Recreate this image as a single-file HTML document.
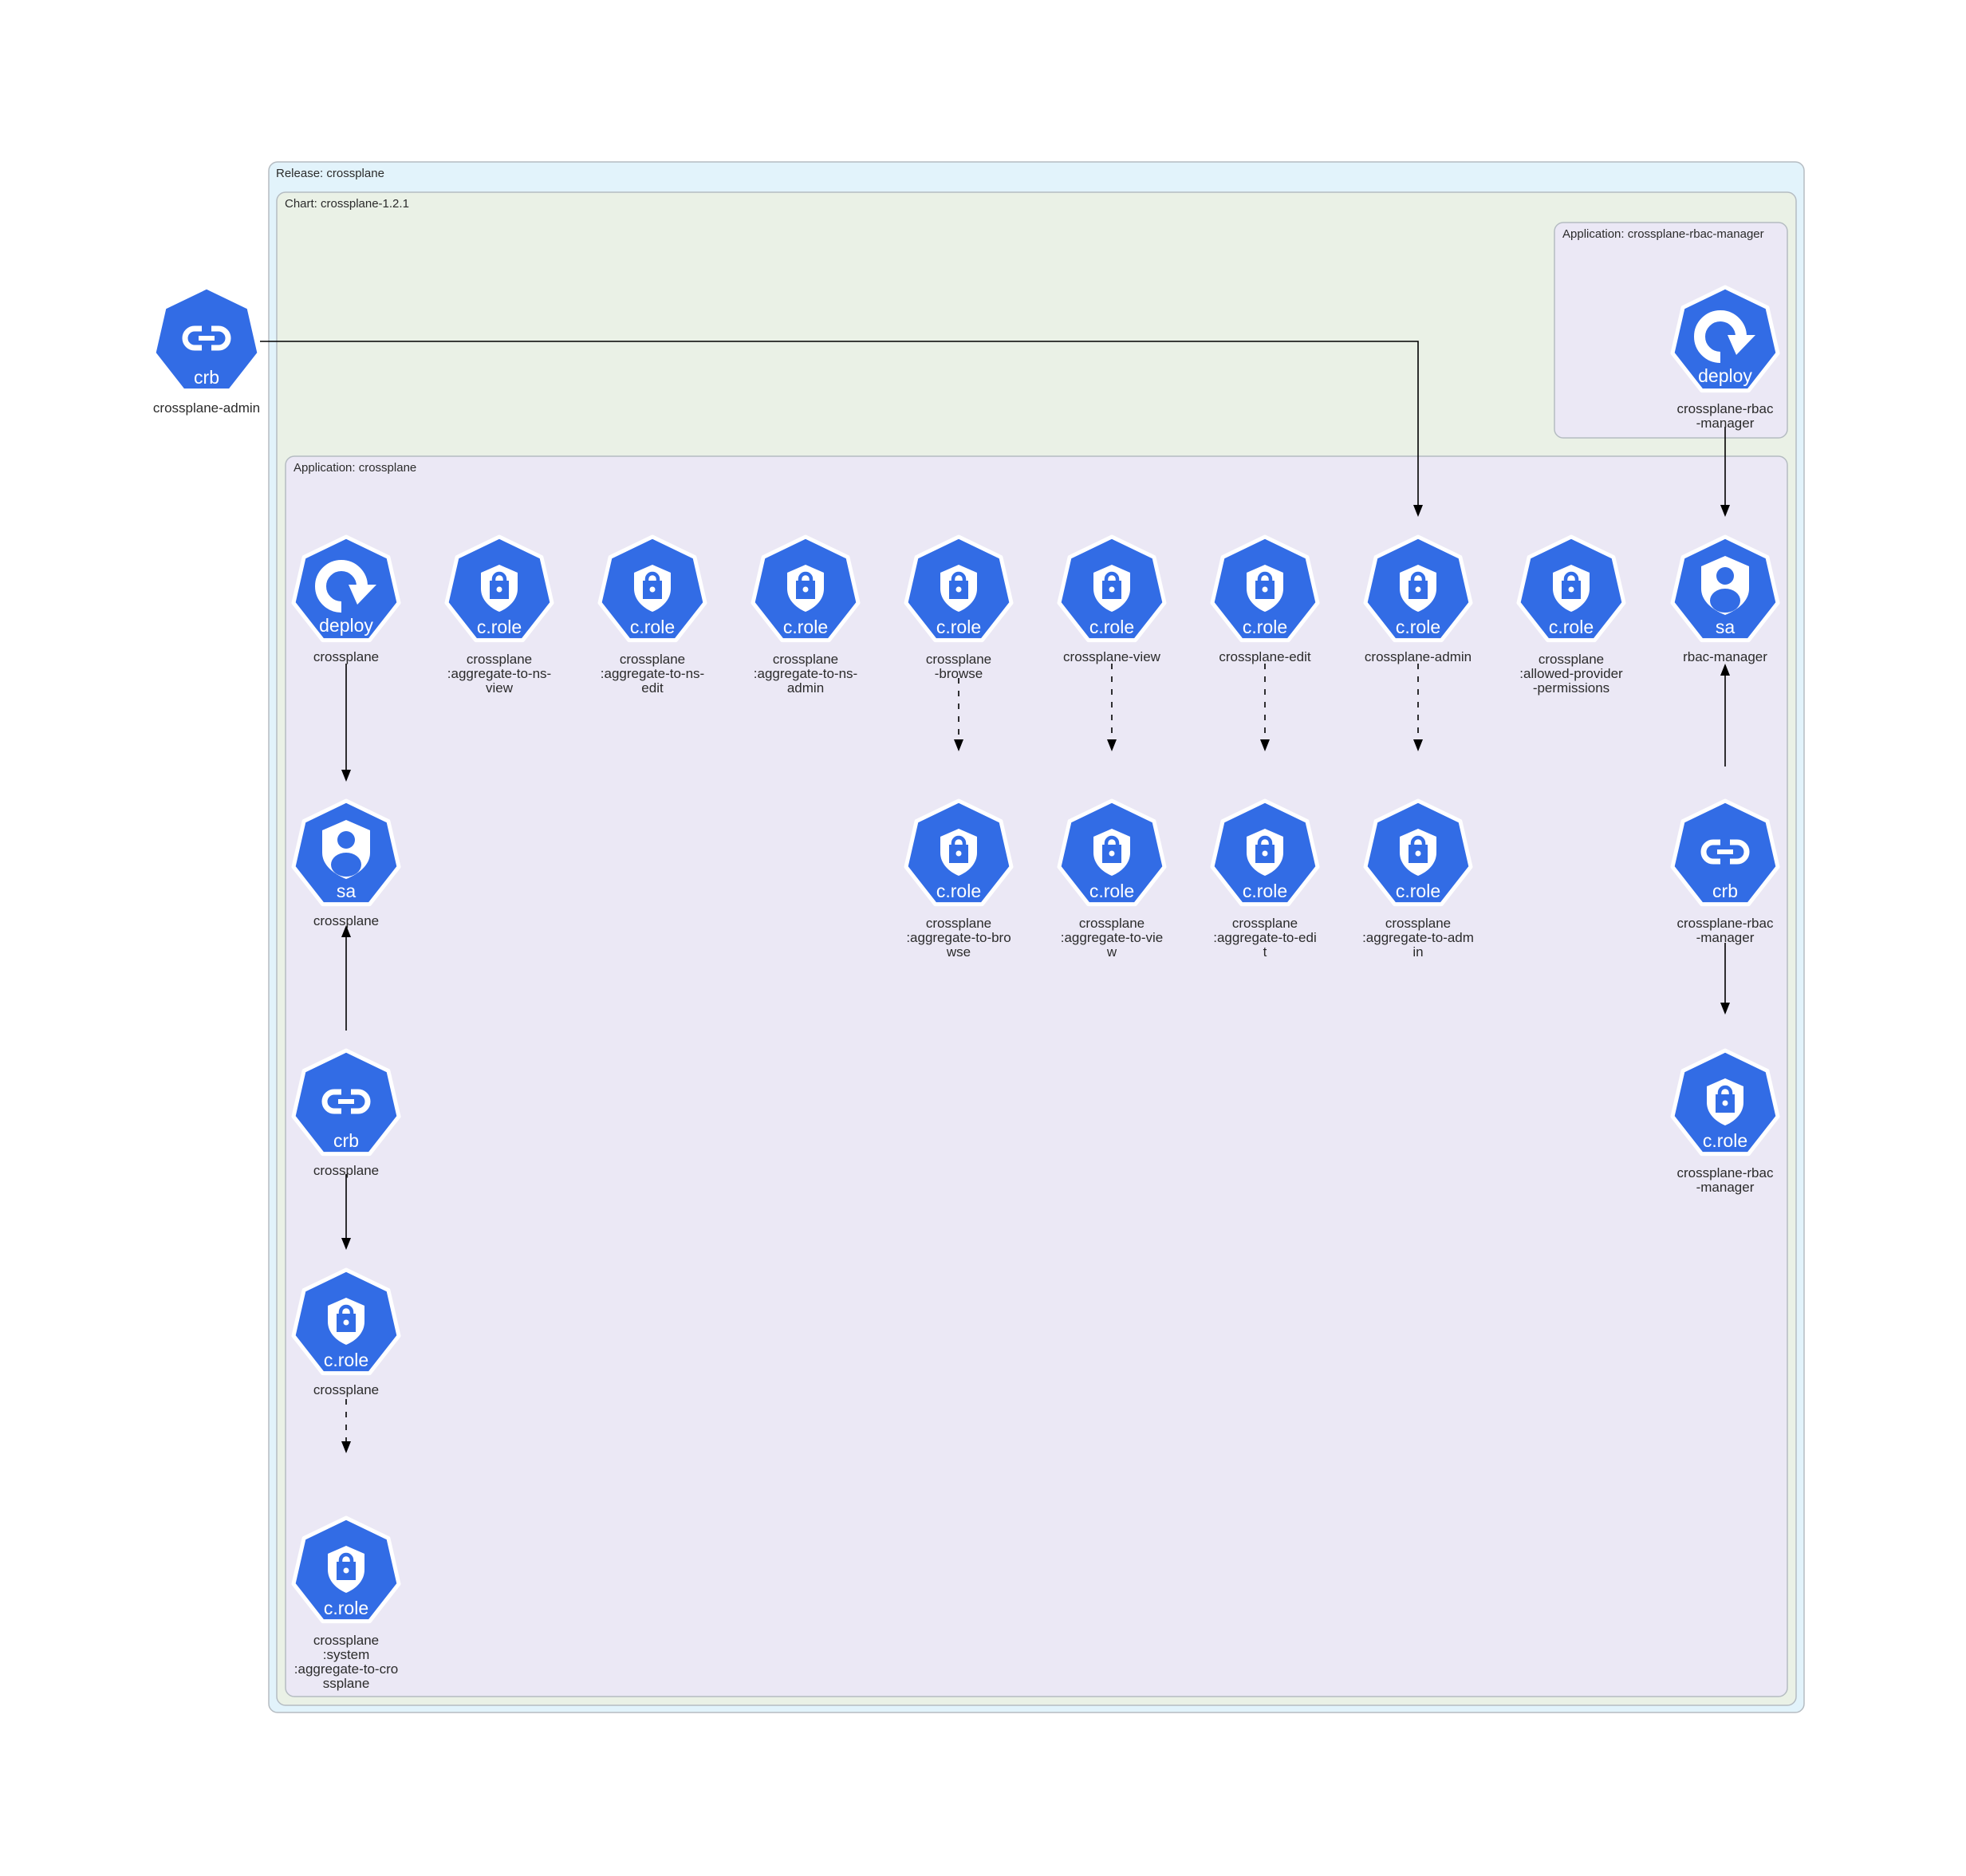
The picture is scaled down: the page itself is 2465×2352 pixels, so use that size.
<!DOCTYPE html>
<html><head><meta charset="utf-8"><style>
html,body{margin:0;padding:0;background:#fff;}
svg{display:block;}
.lb{font-family:"Liberation Sans",sans-serif;font-size:17px;fill:#2b2b2b;text-anchor:middle;}
.ct{font-family:"Liberation Sans",sans-serif;font-size:15px;fill:#2b2b2b;}
.it{font-family:"Liberation Sans",sans-serif;font-size:23px;fill:#fff;text-anchor:middle;}
</style></head><body>
<svg width="2465" height="2352" viewBox="0 0 2465 2352" xmlns="http://www.w3.org/2000/svg">
<defs>
<path id="hex" d="M0,-67 L52.9,-41.5 L66,15.8 L29.4,62.6 L-29.4,62.6 L-66,15.8 L-52.9,-41.5 Z" fill="#326ce5" stroke="#fff" stroke-width="5" stroke-linejoin="round"/>
<g id="lock">
<path d="M0,-32 L23,-22 V-2 C23,12 12,22 0,27 C-12,22 -23,12 -23,-2 V-22 Z" fill="#fff"/>
<rect x="-12" y="-12" width="24" height="23" fill="#326ce5"/>
<path d="M-7,-12 V-14 A7,7 0 0 1 7,-14 V-12" fill="none" stroke="#326ce5" stroke-width="4.5"/>
<circle cx="0" cy="-1" r="3.5" fill="#fff"/>
</g>
<g id="dep">
<path d="M-6,21 A26,26 0 1 1 20,-5" fill="none" stroke="#fff" stroke-width="14"/>
<polygon points="3,-7 38,-7 14,18" fill="#fff"/>
</g>
<g id="sa">
<path d="M0,-43 L30,-30 V-2 C30,14 15,25 0,31 C-15,25 -30,14 -30,-2 V-30 Z" fill="#fff"/>
<circle cx="0" cy="-18" r="11" fill="#326ce5"/>
<ellipse cx="0" cy="13" rx="19" ry="15" fill="#326ce5"/>
</g>
<g id="link">
<path d="M-6,-15 H-15 A12,12 0 0 0 -15,9 H-6" fill="none" stroke="#fff" stroke-width="7"/>
<path d="M6,-15 H15 A12,12 0 0 1 15,9 H6" fill="none" stroke="#fff" stroke-width="7"/>
<path d="M-10,-3 H10" stroke="#fff" stroke-width="6"/>
</g>
<g id="n-role"><use href="#hex"/><use href="#lock"/><text class="it" y="54">c.role</text></g>
<g id="n-dep"><use href="#hex"/><use href="#dep"/><text class="it" y="52">deploy</text></g>
<g id="n-sa"><use href="#hex"/><use href="#sa"/><text class="it" y="54">sa</text></g>
<g id="n-crb"><use href="#hex"/><use href="#link"/><text class="it" y="54">crb</text></g>
<polygon id="ad" points="-6,-15 6,-15 0,0" fill="#000"/>
<polygon id="au" points="-6,15 6,15 0,0" fill="#000"/>
</defs>

<rect x="337" y="203" width="1925" height="1944" rx="11" fill="#e2f3fb" stroke="#b5bcc2" stroke-width="1.5"/>
<text class="ct" x="346" y="222">Release: crossplane</text>
<rect x="347" y="241" width="1905" height="1897" rx="11" fill="#eaf1e6" stroke="#b5bcc2" stroke-width="1.5"/>
<text class="ct" x="357" y="260">Chart: crossplane-1.2.1</text>
<rect x="1949" y="279" width="292" height="270" rx="11" fill="#ebe8f5" stroke="#b5bcc2" stroke-width="1.5"/>
<text class="ct" x="1959" y="298">Application: crossplane-rbac-manager</text>
<rect x="358" y="572" width="1883" height="1555" rx="11" fill="#ebe8f5" stroke="#b5bcc2" stroke-width="1.5"/>
<text class="ct" x="368" y="591">Application: crossplane</text>

<g stroke="#000" stroke-width="1.6" fill="none">
<path d="M326,428 H1778 V634"/>
<path d="M2163,535 V634"/>
<path d="M434,832 V966"/>
<path d="M434,1292 V1170"/>
<path d="M434,1472 V1553"/>
<path d="M434,1754 V1808" stroke-dasharray="7,9"/>
<path d="M1202,850 V928" stroke-dasharray="7,9"/>
<path d="M1394,832 V928" stroke-dasharray="7,9"/>
<path d="M1586,832 V928" stroke-dasharray="7,9"/>
<path d="M1778,832 V928" stroke-dasharray="7,9"/>
<path d="M2163,961 V846"/>
<path d="M2163,1182 V1258"/>
</g>
<use href="#ad" x="1778" y="648"/>
<use href="#ad" x="2163" y="648"/>
<use href="#ad" x="434" y="980"/>
<use href="#au" x="434" y="1160"/>
<use href="#ad" x="434" y="1567"/>
<use href="#ad" x="434" y="1822"/>
<use href="#ad" x="1202" y="942"/>
<use href="#ad" x="1394" y="942"/>
<use href="#ad" x="1586" y="942"/>
<use href="#ad" x="1778" y="942"/>
<use href="#au" x="2163" y="832"/>
<use href="#ad" x="2163" y="1272"/>

<use href="#n-crb" x="259" y="427"/>
<text class="lb" x="259" y="517">crossplane-admin</text>
<use href="#n-dep" x="2163" y="427"/>
<text class="lb" x="2163" y="518">crossplane-rbac</text><text class="lb" x="2163" y="536">-manager</text>

<use href="#n-dep" x="434" y="740"/><text class="lb" x="434" y="829">crossplane</text>
<use href="#n-role" x="626" y="740"/><text class="lb" x="626" y="832">crossplane</text><text class="lb" x="626" y="850">:aggregate-to-ns-</text><text class="lb" x="626" y="868">view</text>
<use href="#n-role" x="818" y="740"/><text class="lb" x="818" y="832">crossplane</text><text class="lb" x="818" y="850">:aggregate-to-ns-</text><text class="lb" x="818" y="868">edit</text>
<use href="#n-role" x="1010" y="740"/><text class="lb" x="1010" y="832">crossplane</text><text class="lb" x="1010" y="850">:aggregate-to-ns-</text><text class="lb" x="1010" y="868">admin</text>
<use href="#n-role" x="1202" y="740"/><text class="lb" x="1202" y="832">crossplane</text><text class="lb" x="1202" y="850">-browse</text>
<use href="#n-role" x="1394" y="740"/><text class="lb" x="1394" y="829">crossplane-view</text>
<use href="#n-role" x="1586" y="740"/><text class="lb" x="1586" y="829">crossplane-edit</text>
<use href="#n-role" x="1778" y="740"/><text class="lb" x="1778" y="829">crossplane-admin</text>
<use href="#n-role" x="1970" y="740"/><text class="lb" x="1970" y="832">crossplane</text><text class="lb" x="1970" y="850">:allowed-provider</text><text class="lb" x="1970" y="868">-permissions</text>
<use href="#n-sa" x="2163" y="740"/><text class="lb" x="2163" y="829">rbac-manager</text>

<use href="#n-sa" x="434" y="1071"/><text class="lb" x="434" y="1160">crossplane</text>
<use href="#n-role" x="1202" y="1071"/><text class="lb" x="1202" y="1163">crossplane</text><text class="lb" x="1202" y="1181">:aggregate-to-bro</text><text class="lb" x="1202" y="1199">wse</text>
<use href="#n-role" x="1394" y="1071"/><text class="lb" x="1394" y="1163">crossplane</text><text class="lb" x="1394" y="1181">:aggregate-to-vie</text><text class="lb" x="1394" y="1199">w</text>
<use href="#n-role" x="1586" y="1071"/><text class="lb" x="1586" y="1163">crossplane</text><text class="lb" x="1586" y="1181">:aggregate-to-edi</text><text class="lb" x="1586" y="1199">t</text>
<use href="#n-role" x="1778" y="1071"/><text class="lb" x="1778" y="1163">crossplane</text><text class="lb" x="1778" y="1181">:aggregate-to-adm</text><text class="lb" x="1778" y="1199">in</text>
<use href="#n-crb" x="2163" y="1071"/><text class="lb" x="2163" y="1163">crossplane-rbac</text><text class="lb" x="2163" y="1181">-manager</text>

<use href="#n-crb" x="434" y="1384"/><text class="lb" x="434" y="1473">crossplane</text>
<use href="#n-role" x="2163" y="1384"/><text class="lb" x="2163" y="1476">crossplane-rbac</text><text class="lb" x="2163" y="1494">-manager</text>
<use href="#n-role" x="434" y="1659"/><text class="lb" x="434" y="1748">crossplane</text>
<use href="#n-role" x="434" y="1970"/><text class="lb" x="434" y="2062">crossplane</text><text class="lb" x="434" y="2080">:system</text><text class="lb" x="434" y="2098">:aggregate-to-cro</text><text class="lb" x="434" y="2116">ssplane</text>
</svg>
</body></html>
